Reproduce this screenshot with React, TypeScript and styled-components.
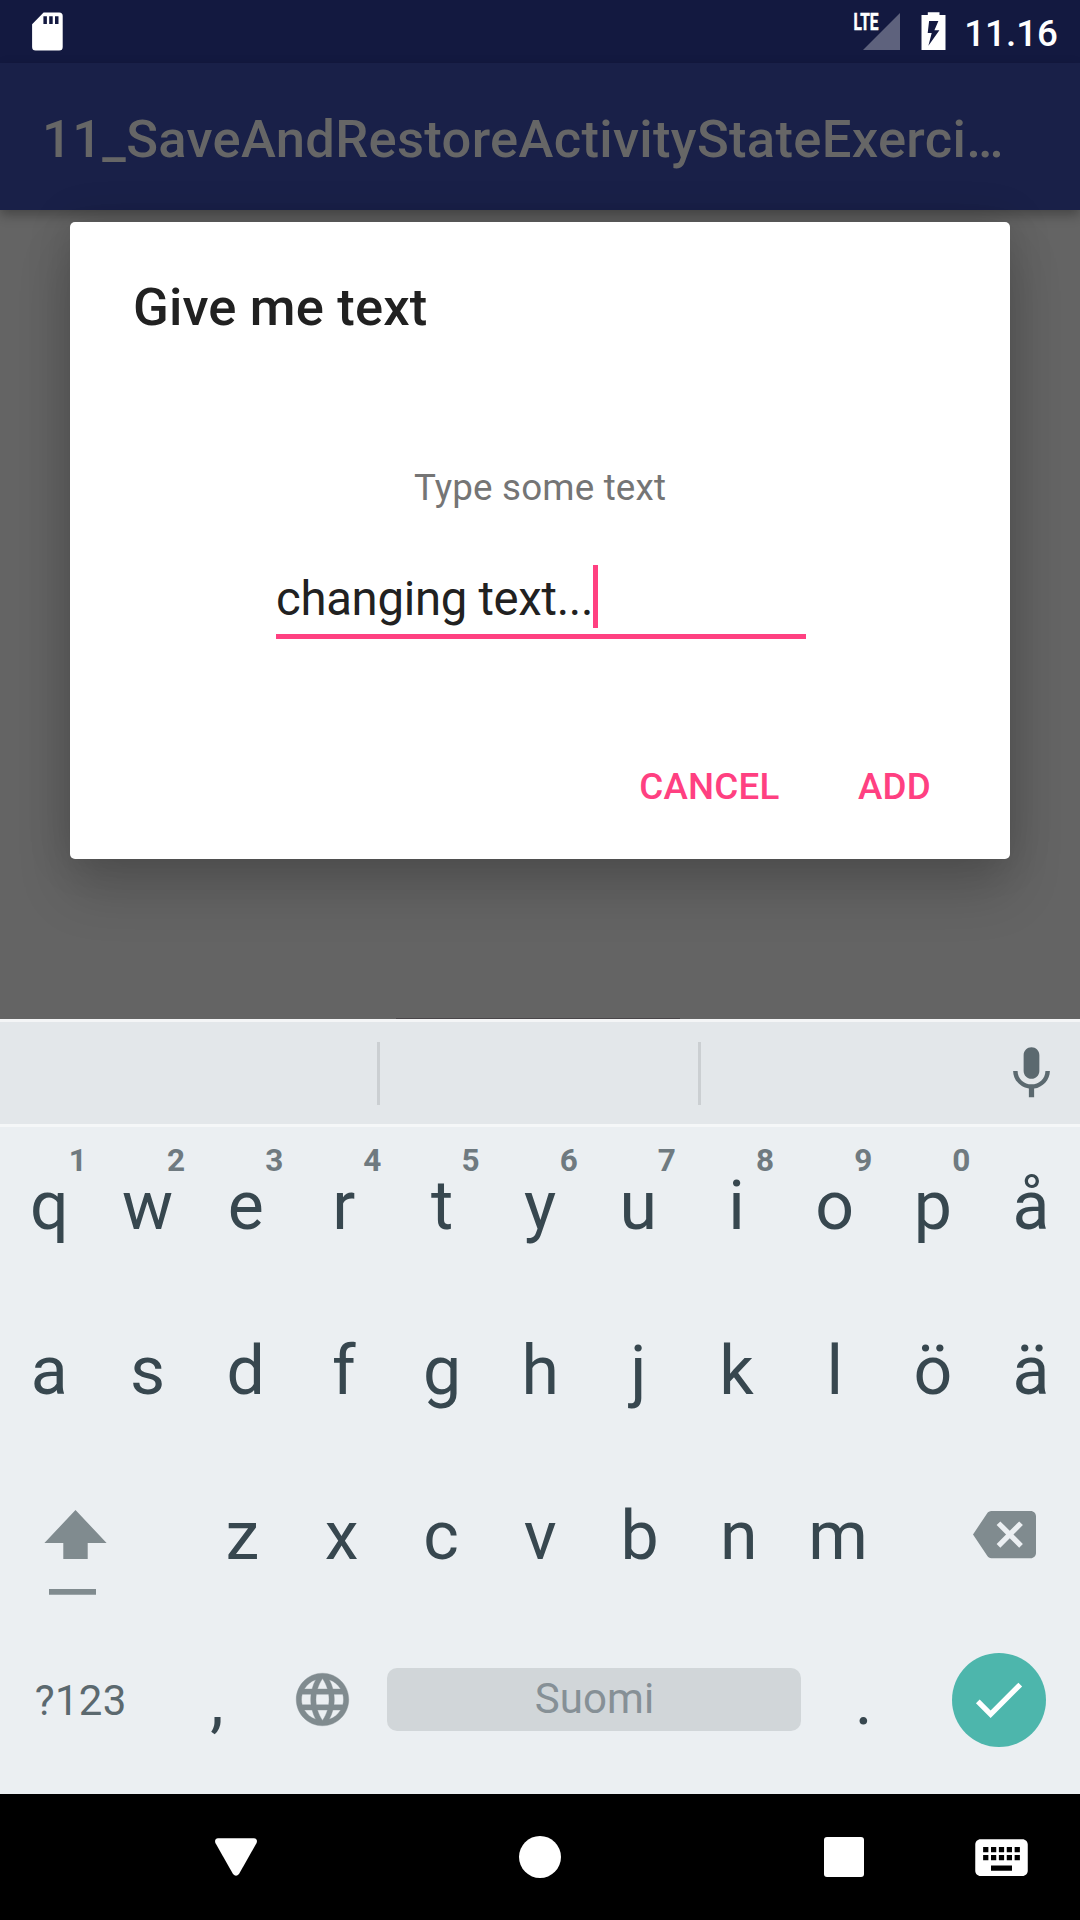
import React from "react";
import styled, { createGlobalStyle } from "styled-components";

const GlobalStyle = createGlobalStyle`
  * { box-sizing: border-box; }
  html, body { margin: 0; padding: 0; background: #000; }
  body { font-family: Roboto, "Noto Sans", sans-serif; }
`;

const ACCENT = "#ff4081";
const KEY_TEXT = "#37474f";
const KEY_ICON = "#808b8f";

const Screen = styled.div`
  width: 1080px;
  height: 1920px;
  display: flex;
  flex-direction: column;
  background: #646464;
  overflow: hidden;
`;

const StatusBar = styled.header`
  height: 63px;
  flex: none;
  display: flex;
  align-items: flex-start;
  justify-content: space-between;
  padding: 0 22px 0 32px;
  background: #131940;
  color: #fff;
`;

const StatusIcons = styled.div`
  display: flex;
  align-items: flex-start;
  gap: 20px;
`;

const Clock = styled.span`
  width: 92px;
  display: flex;
  justify-content: flex-end;
  font-size: 36.75px;
  font-weight: 500;
  line-height: 67px;
  white-space: nowrap;
`;

const AppBar = styled.div`
  height: 147px;
  flex: none;
  padding: 0 42px;
  background: #192048;
  box-shadow: 0 5px 11px rgba(0, 0, 0, 0.3);
`;

const AppTitle = styled.h1`
  margin: 0;
  font-size: 52.5px;
  font-weight: 500;
  line-height: 152px;
  letter-spacing: 0.33px;
  color: #666;
  white-space: nowrap;
`;

const Content = styled.main`
  height: 809px;
  flex: none;
  display: flex;
  flex-direction: column;
  align-items: center;
  justify-content: space-between;
  padding-top: 12px;
`;

const Dialog = styled.section`
  width: 940px;
  height: 637px;
  display: flex;
  flex-direction: column;
  padding: 54px 63px 0;
  border-radius: 5px;
  background: #fff;
  box-shadow: 0 32px 54px rgba(0, 0, 0, 0.16), 0 0 44px rgba(0, 0, 0, 0.16);
`;

const DialogTitle = styled.h2`
  margin: 0;
  font-size: 52.5px;
  font-weight: 500;
  line-height: 62px;
  letter-spacing: 0.17px;
  color: #212121;
`;

const Prompt = styled.p`
  margin: 128px 0 0;
  font-size: 36.75px;
  line-height: 43px;
  letter-spacing: 0.17px;
  text-align: center;
  color: #757575;
`;

const Field = styled.div`
  display: flex;
  width: 530px;
  height: 74px;
  margin: 56px 0 0 143px;
  border-bottom: 5px solid ${ACCENT};
`;

const FieldText = styled.span`
  font-size: 47.25px;
  line-height: 68px;
  letter-spacing: -0.28px;
  color: #212121;
  white-space: nowrap;
`;

const Caret = styled.span`
  width: 5px;
  height: 63px;
  background: ${ACCENT};
`;

const Actions = styled.div`
  display: flex;
  justify-content: flex-end;
  gap: 78.5px;
  margin-top: 126px;
  padding-right: 16px;
`;

const TextButton = styled.button`
  padding: 0;
  border: 0;
  background: none;
  font-family: inherit;
  font-size: 36.75px;
  font-weight: 500;
  line-height: 43px;
  letter-spacing: 0.2px;
  color: ${ACCENT};
`;

const HiddenButtonEdge = styled.div`
  width: 284px;
  height: 1px;
  margin-right: 5px;
  background: #4a474a;
`;

const Keyboard = styled.section`
  height: 775px;
  flex: none;
  background: #ebeff2;
`;

const Suggestions = styled.div`
  display: flex;
  align-items: center;
  height: 108px;
  border-top: 3px solid #f4f5f6;
  border-bottom: 3px solid #f5f7f8;
  background: #e3e7ea;
`;

const Slot = styled.div<{ $width: number; $divider?: boolean }>`
  display: flex;
  justify-content: flex-end;
  width: ${(p) => p.$width}px;
  height: 63px;
  border-right: ${(p) => (p.$divider ? "3px solid #cbcfd2" : "0")};
`;

const KeyRow = styled.div<{ $height?: number }>`
  display: flex;
  height: ${(p) => p.$height ?? 165}px;
`;

const Key = styled.div<{ $width: number; $line?: number }>`
  position: relative;
  width: ${(p) => p.$width}px;
  flex: none;
  padding-left: 0.5px;
  font-size: 68px;
  line-height: ${(p) => p.$line ?? 168}px;
  text-align: center;
  color: ${KEY_TEXT};
`;

const Hint = styled.span`
  position: absolute;
  top: 21px;
  right: 11.3px;
  font-size: 31.5px;
  font-weight: 700;
  line-height: 25px;
  color: #6f7a80;
`;

const IconKey = styled.div<{ $width: number }>`
  display: flex;
  align-items: center;
  justify-content: center;
  width: ${(p) => p.$width}px;
  flex: none;
`;

const ShiftKey = styled.div`
  width: 192.5px;
  flex: none;
  padding: 58px 0 0 44px;
`;

const SymbolsKey = styled.div`
  width: 160px;
  flex: none;
  padding-left: 1.5px;
  font-size: 42px;
  line-height: 167px;
  letter-spacing: 0.3px;
  text-align: center;
  color: #5b696f;
`;

const SpaceBar = styled.div`
  width: 414px;
  height: 63px;
  flex: none;
  margin: 51px 0 0 15.5px;
  padding-left: 1px;
  border-radius: 10px;
  background: #d1d6d9;
  font-size: 42px;
  line-height: 61px;
  letter-spacing: 0.1px;
  text-align: center;
  color: #869096;
`;

const EnterButton = styled.div`
  display: flex;
  align-items: center;
  justify-content: center;
  width: 94px;
  height: 94px;
  padding-right: 2px;
  border-radius: 50%;
  background: #4db6ac;
`;

const NavBar = styled.nav`
  height: 126px;
  flex: none;
  display: flex;
  align-items: center;
  padding-left: 112px;
  background: #000;
`;

const NavItem = styled.div<{ $width: number }>`
  display: flex;
  align-items: center;
  justify-content: center;
  width: ${(p) => p.$width}px;
  height: 126px;
`;

const Svg = styled.svg`
  display: block;
  flex: none;
  overflow: visible;
`;

type GlyphProps = { d: string; color: string; size?: number; weight?: number };

const Glyph = ({ d, color, size = 63, weight = 0 }: GlyphProps) => (
  <Svg
    width={size}
    height={size}
    viewBox="0 0 24 24"
    fill={color}
    stroke={weight ? color : "none"}
    strokeWidth={weight}
  >
    <path d={d} />
  </Svg>
);

const MIC =
  "M12 14c1.66 0 2.99-1.34 2.99-3L15 5c0-1.66-1.34-3-3-3S9 3.34 9 5v6c0 1.66 1.34 3 3 3zm5.3-3c0 3-2.54 5.1-5.3 5.1S6.7 14 6.7 11H5c0 3.41 2.72 6.23 6 6.72V21h2v-3.28c3.28-.48 6-3.3 6-6.72h-1.7z";
const GLOBE =
  "M11.99 2C6.47 2 2 6.48 2 12s4.47 10 9.99 10C17.52 22 22 17.52 22 12S17.52 2 11.99 2zm6.93 6h-2.95c-.32-1.25-.78-2.45-1.38-3.56 1.84.63 3.37 1.91 4.33 3.56zM12 4.04c.83 1.2 1.48 2.53 1.91 3.96h-3.82c.43-1.43 1.08-2.76 1.91-3.96zM4.26 14C4.1 13.36 4 12.69 4 12s.1-1.36.26-2h3.38c-.08.66-.14 1.32-.14 2 0 .68.06 1.34.14 2H4.26zm.82 2h2.95c.32 1.25.78 2.45 1.38 3.56-1.84-.63-3.37-1.9-4.33-3.56zm2.95-8H5.08c.96-1.66 2.49-2.93 4.33-3.56C8.81 5.55 8.35 6.75 8.03 8zM12 19.96c-.83-1.2-1.48-2.53-1.91-3.96h3.82c-.43 1.43-1.08 2.76-1.91 3.96zM14.34 14H9.66c-.09-.66-.16-1.32-.16-2 0-.68.07-1.35.16-2h4.68c.09.65.16 1.32.16 2 0 .68-.07 1.34-.16 2zm.25 5.56c.6-1.11 1.06-2.31 1.38-3.56h2.95c-.96 1.65-2.49 2.93-4.33 3.56zM16.36 14c.08-.66.14-1.32.14-2 0-.68-.06-1.34-.14-2h3.38c.16.64.26 1.31.26 2s-.1 1.36-.26 2h-3.38z";
const BACKSPACE =
  "M22 3H7c-.69 0-1.23.35-1.59.88L0 12l5.41 8.11c.36.53.9.89 1.59.89h15c1.1 0 2-.9 2-2V5c0-1.1-.9-2-2-2zm-3 12.59L17.59 17 14 13.41 10.41 17 9 15.59 12.59 12 9 8.41 10.41 7 14 10.59 17.59 7 19 8.41 15.41 12 19 15.59z";
const CHECK = "M9 16.17L4.83 12l-1.42 1.41L9 19 21 7l-1.41-1.41z";
const KEYBOARD =
  "M20 5H4c-1.1 0-1.99.9-1.99 2L2 17c0 1.1.9 2 2 2h16c1.1 0 2-.9 2-2V7c0-1.1-.9-2-2-2zm-9 3h2v2h-2V8zm0 3h2v2h-2v-2zM8 8h2v2H8V8zm0 3h2v2H8v-2zm-1 2H5v-2h2v2zm0-3H5V8h2v2zm9 7H8v-2h8v2zm0-4h-2v-2h2v2zm0-3h-2V8h2v2zm3 3h-2v-2h2v2zm0-3h-2V8h2v2z";

const SdCardIcon = () => (
  <Svg width="31" height="63" viewBox="32 0 31 63">
    <path
      fill="#fff"
      fillRule="evenodd"
      d="M43.6 12.6H59.2a3.5 3.5 0 0 1 3.5 3.5V47a3.5 3.5 0 0 1-3.5 3.5H35.6A3.5 3.5 0 0 1 32.1 47V24.2zM43.4 16.2v7.8h3.5v-7.8zM49.2 16.2v7.8h3.5v-7.8zM55 16.2v7.8h3.5v-7.8z"
    />
  </Svg>
);

const SignalIcon = () => (
  <Svg width="48" height="63" viewBox="853 0 48 63">
    <path fill="#fff" fillOpacity="0.32" d="M863 50L900 13V50z" />
    <text
      x="853.5"
      y="30.2"
      fill="#fff"
      stroke="#fff"
      strokeWidth="0.5"
      fontSize="23"
      fontWeight="700"
      textLength="25"
      lengthAdjust="spacingAndGlyphs"
    >
      LTE
    </text>
  </Svg>
);

const BatteryIcon = () => (
  <Svg width="25" height="63" viewBox="921.5 0 25 63">
    <path
      fill="#fff"
      fillRule="evenodd"
      d="M928.3 12.2H940V15h6v35h-24V15h6.3zM929.6 21L928.2 33H932.2L928.9 45.7L939.9 30.3H934.9L938.9 21z"
    />
  </Svg>
);

const ShiftIcon = () => (
  <Svg width="63" height="86" viewBox="0 0 63 86" fill={KEY_ICON}>
    <path d="M31.5 0L62.6 33H43.7V49H19.3V33H.4z" />
    <path d="M5 79H52V84.7H5z" />
  </Svg>
);

const topKeys = "qwertyuiopå".split("");
const homeKeys = "asdfghjklöä".split("");
const bottomKeys = "zxcvbnm".split("");
const hints = "1234567890".split("");
const COLUMN = 1080 / 11;

export default function App() {
  return (
    <>
      <GlobalStyle />
      <Screen>
        <StatusBar>
          <SdCardIcon />
          <StatusIcons>
            <SignalIcon />
            <BatteryIcon />
            <Clock>11.16</Clock>
          </StatusIcons>
        </StatusBar>
        <AppBar>
          <AppTitle>11_SaveAndRestoreActivityStateExerci…</AppTitle>
        </AppBar>
        <Content>
          <Dialog>
            <DialogTitle>Give me text</DialogTitle>
            <Prompt>Type some text</Prompt>
            <Field>
              <FieldText>changing text...</FieldText>
              <Caret />
            </Field>
            <Actions>
              <TextButton>CANCEL</TextButton>
              <TextButton>ADD</TextButton>
            </Actions>
          </Dialog>
          <HiddenButtonEdge />
        </Content>
        <Keyboard>
          <Suggestions>
            <Slot $width={380} $divider />
            <Slot $width={321} $divider />
            <Slot $width={362}>
              <Glyph d={MIC} color="#5b696f" />
            </Slot>
          </Suggestions>
          <KeyRow $height={160}>
            {topKeys.map((k, i) => (
              <Key key={k} $width={COLUMN} $line={158}>
                {k}
                {hints[i] && <Hint>{hints[i]}</Hint>}
              </Key>
            ))}
          </KeyRow>
          <KeyRow>
            {homeKeys.map((k) => (
              <Key key={k} $width={COLUMN}>
                {k}
              </Key>
            ))}
          </KeyRow>
          <KeyRow>
            <ShiftKey>
              <ShiftIcon />
            </ShiftKey>
            {bottomKeys.map((k) => (
              <Key key={k} $width={99.3}>
                {k}
              </Key>
            ))}
            <IconKey $width={233}>
              <Glyph d={BACKSPACE} color={KEY_ICON} />
            </IconKey>
          </KeyRow>
          <KeyRow>
            <SymbolsKey>?123</SymbolsKey>
            <Key $width={113.5}>,</Key>
            <IconKey $width={98}>
              <Glyph d={GLOBE} color={KEY_ICON} weight={0.15} />
            </IconKey>
            <SpaceBar>Suomi</SpaceBar>
            <Key $width={125}>.</Key>
            <IconKey $width={146}>
              <EnterButton>
                <Glyph d={CHECK} color="#fff" />
              </EnterButton>
            </IconKey>
          </KeyRow>
        </Keyboard>
        <NavBar>
          <NavItem $width={248}>
            <Svg width="42" height="38" viewBox="0 0 42 38">
              <path
                fill="#fff"
                d="M3 .2H39Q43 .8 41.6 5L24 36Q21 39.5 18 36L.4 5Q-1 .8 3 .2z"
              />
            </Svg>
          </NavItem>
          <NavItem $width={360}>
            <Svg width="42" height="42" viewBox="0 0 42 42">
              <circle cx="21" cy="21" r="21" fill="#fff" />
            </Svg>
          </NavItem>
          <NavItem $width={248}>
            <Svg width="40" height="40" viewBox="0 0 40 40">
              <rect width="40" height="40" rx="3" fill="#fff" />
            </Svg>
          </NavItem>
          <NavItem $width={67}>
            <Glyph d={KEYBOARD} color="#fff" />
          </NavItem>
        </NavBar>
      </Screen>
    </>
  );
}
